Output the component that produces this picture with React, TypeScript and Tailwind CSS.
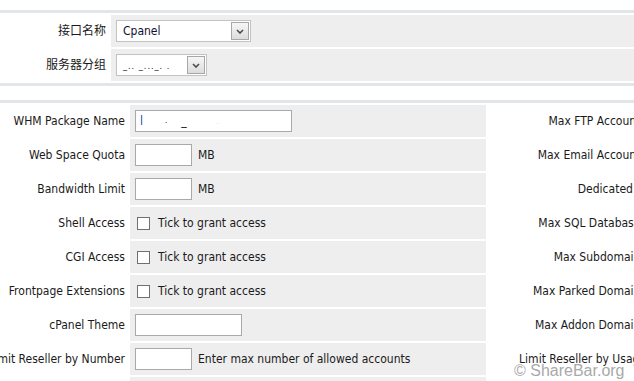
const font = '[font-family:"DejaVu_Sans_Condensed","DejaVu_Sans","Noto_Sans_CJK_SC",sans-serif]'

function Chevron() {
  return (
    <svg width="8" height="5" viewBox="0 0 8 5" className="block">
      <path d="M1 1 L4 4 L7 1" fill="none" stroke="#4a4a4a" strokeWidth="1.6" />
    </svg>
  )
}

function Select({ width, children }: { width: string; children: React.ReactNode }) {
  return (
    <div className={`${width} flex h-[22px] items-center border border-[#c3c3c3] bg-white pr-[1px]`}>
      <div className="flex-1 pl-[6px] text-[12px] text-[#101030]">{children}</div>
      <div className="flex h-[18px] w-[18px] items-center justify-center border border-[#a7a7a7] bg-gradient-to-b from-[#f6f6f6] to-[#dcdcdc]">
        <Chevron />
      </div>
    </div>
  )
}

function Input({ width, children }: { width: string; children?: React.ReactNode }) {
  return (
    <div className={`${width} flex h-[22px] items-center border border-[#a9a9a9] bg-white px-[4px] text-[12px]`}>
      {children}
    </div>
  )
}

function Tick() {
  return (
    <div className="flex items-center">
      <div className="ml-[2px] h-[13px] w-[13px] border border-[#707070] bg-white" />
      <span className="ml-[8px]">Tick to grant access</span>
    </div>
  )
}

function Divider({ className = '' }: { className?: string }) {
  return <div className={`h-[3px] bg-[#e3e6e9] ${className}`} />
}

export default function App() {
  const rows = [
    { label: 'WHM Package Name', right: 'Max FTP Accounts', field: (
      <Input width="w-[157px]">
        <span className="text-[#3344aa]">l</span>
        <span className="ml-[22px] text-[8px] text-[#333]">.</span>
        <span className="ml-[14px] text-[#222]">_</span>
        <span className="ml-[30px] text-[6px] text-[#9cc]">.</span>
      </Input>
    ) },
    { label: 'Web Space Quota', right: 'Max Email Accounts', field: (
      <div className="flex items-center">
        <Input width="w-[57px]" />
        <span className="ml-[6px]">MB</span>
      </div>
    ) },
    { label: 'Bandwidth Limit', right: 'Dedicated IP', field: (
      <div className="flex items-center">
        <Input width="w-[57px]" />
        <span className="ml-[6px]">MB</span>
      </div>
    ) },
    { label: 'Shell Access', right: 'Max SQL Databases', field: <Tick /> },
    { label: 'CGI Access', right: 'Max Subdomains', field: <Tick /> },
    { label: 'Frontpage Extensions', right: 'Max Parked Domains', field: <Tick /> },
    { label: 'cPanel Theme', right: 'Max Addon Domains', field: <Input width="w-[107px]" /> },
    { label: 'Limit Reseller by Number', right: 'Limit Reseller by Usage', field: (
      <div className="flex items-center">
        <Input width="w-[57px]" />
        <span className="ml-[6px]">Enter max number of allowed accounts</span>
      </div>
    ) },
    { label: '', right: '', field: null },
  ]

  return (
    <div className={`relative h-[381px] w-[634px] overflow-hidden bg-white text-[12px] text-[#1a1a1a] ${font}`}>
      {/* interface selection */}
      <Divider className="mt-[10px]" />
      <div className="mt-[2px] flex flex-col gap-[2px]">
        <div className="flex h-[32px]">
          <div className="flex w-[111px] shrink-0 items-center justify-end pr-[5px] text-[12px]">接口名称</div>
          <div className="flex flex-1 items-center bg-[#eeeeee] pl-[5px]">
            <Select width="w-[135px]">Cpanel</Select>
          </div>
        </div>
        <div className="flex h-[32px]">
          <div className="flex w-[111px] shrink-0 items-center justify-end pr-[5px] text-[12px]">服务器分组</div>
          <div className="flex flex-1 items-center bg-[#eeeeee] pl-[5px]">
            <Select width="w-[91px]">
              <span className="text-[9px] tracking-[1px] text-[#222]">_.. _..._. .</span>
            </Select>
          </div>
        </div>
      </div>
      <Divider className="mt-[2px]" />

      {/* package settings */}
      <Divider className="mt-[14px]" />
      <div className="mt-[2px] flex flex-col gap-[2px]">
        {rows.map((row, i) => (
          <div key={i} className="flex h-[32px] w-[700px]">
            <div className="flex w-[130px] shrink-0 items-center justify-end whitespace-nowrap pr-[5px]">
              {row.label}
            </div>
            <div className="flex w-[356px] shrink-0 items-center bg-[#eeeeee] pl-[5px]">{row.field}</div>
            <div className="flex w-[160px] shrink-0 items-center justify-end whitespace-nowrap">{row.right}</div>
          </div>
        ))}
      </div>

      <div className="absolute left-[514px] top-[359px] text-[16px] text-[#a9a9a9] [font-family:'Liberation_Sans',Arial,sans-serif] [text-shadow:0_0_2px_#fff,0_0_1px_#fff]">
        © ShareBar.org
      </div>
    </div>
  )
}
